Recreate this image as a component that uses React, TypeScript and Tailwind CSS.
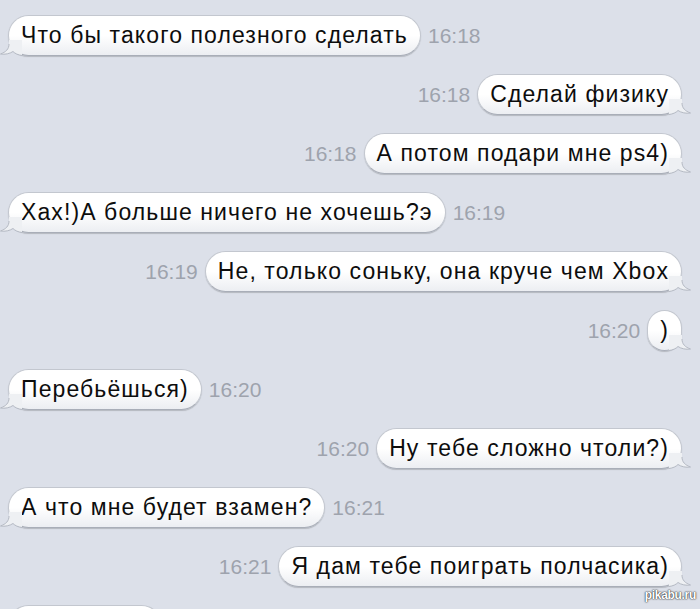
import type { ReactNode } from 'react';

type Msg = { text: string; time: string; mine: boolean };

const messages: Msg[] = [
  { text: 'Что бы такого полезного сделать', time: '16:18', mine: false },
  { text: 'Сделай физику', time: '16:18', mine: true },
  { text: 'А потом подари мне ps4)', time: '16:18', mine: true },
  { text: 'Хах!)А больше ничего не хочешь?э', time: '16:19', mine: false },
  { text: 'Не, только соньку, она круче чем Xbox', time: '16:19', mine: true },
  { text: ')', time: '16:20', mine: true },
  { text: 'Перебьёшься)', time: '16:20', mine: false },
  { text: 'Ну тебе сложно чтоли?)', time: '16:20', mine: true },
  { text: 'А что мне будет взамен?', time: '16:21', mine: false },
  { text: 'Я дам тебе поиграть полчасика)', time: '16:21', mine: true },
];

const Tail = ({ mine }: { mine: boolean }) => (
  <svg
    width="22"
    height="16"
    viewBox="0 0 22 16"
    className={`absolute bottom-[-1px] ${mine ? 'right-[-10px] -scale-x-100' : 'left-[-9px]'}`}
  >
    <path d="M9 0 L9 4 C9 9 6 12 0.5 14 C5 14.8 10 13.6 13 11.5 C15 13.6 18 15 22 15.5 L22 0 Z" fill="#eef0f3" />
    <path
      d="M9 4 C9 9 6 12 0.5 14 C5 14.8 10 13.6 13 11.5 C15 13.6 18 15 22 15.5"
      fill="none"
      stroke="#b4b9c3"
      strokeWidth="1"
    />
  </svg>
);

const Bubble = ({ mine, children, className = '' }: { mine: boolean; children: ReactNode; className?: string }) => (
  <div
    className={`relative h-[41px] flex items-center rounded-[21px] border border-[#c3c7cf] border-b-[#a9aeb8] bg-gradient-to-b from-white via-white to-[#eceef2] shadow-[0_1px_1px_rgba(0,0,0,0.18)] px-[12px] text-[23px] tracking-[1.1px] text-[#0d0d0d] whitespace-nowrap ${className}`}
  >
    {children}
    <Tail mine={mine} />
  </div>
);

const Time = ({ children }: { children: ReactNode }) => (
  <span className="text-[21px] text-[#9ea3ad]">{children}</span>
);

export default function App() {
  return (
    <div
      className="relative h-[609px] w-[700px] overflow-hidden bg-[#dce0e9]"
      style={{ fontFamily: '"Liberation Sans", Arial, sans-serif' }}
    >
      <div className="flex flex-col gap-[18px] pt-[15px] pl-[8px] pr-[18px]">
        {messages.map((m, i) => (
          <div key={i} className={`flex items-center gap-[7px] ${m.mine ? 'justify-end' : 'justify-start'}`}>
            {m.mine && <Time>{m.time}</Time>}
            <Bubble mine={m.mine}>{m.text}</Bubble>
            {!m.mine && <Time>{m.time}</Time>}
          </div>
        ))}
        <div className="flex">
          <Bubble mine={false} className="w-[154px]">
            <span className="invisible">…</span>
          </Bubble>
        </div>
      </div>

      <span
        className="absolute right-[4px] bottom-[5px] text-[12px] font-bold text-white tracking-[-0.3px]"
        style={{ textShadow: '0 0 2px #333, 0 0 1px #000' }}
      >
        pikabu.ru
      </span>
    </div>
  );
}
